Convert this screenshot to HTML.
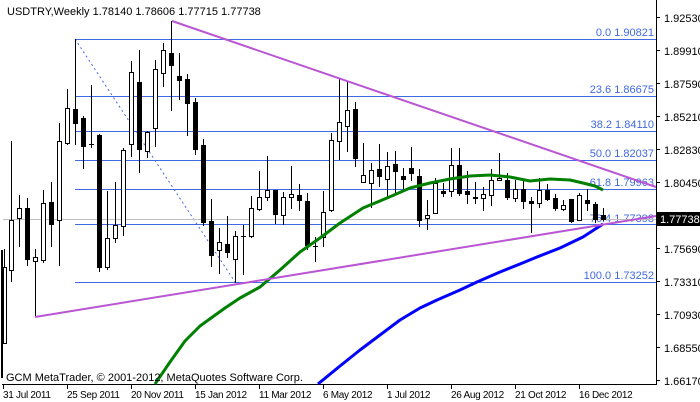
<!DOCTYPE html>
<html><head><meta charset="utf-8"><style>
html,body{margin:0;padding:0;background:#fff;}
svg{display:block;}
text{font-family:"Liberation Sans",sans-serif;font-size:11px;}
.d{font-size:10px;letter-spacing:-0.3px;}
</style></head><body>
<svg width="700" height="402" viewBox="0 0 700 402" xmlns="http://www.w3.org/2000/svg" shape-rendering="crispEdges">
<rect width="700" height="402" fill="#fff"/>
<line x1="656.5" y1="0" x2="656.5" y2="384.5" stroke="#000"/>
<line x1="2" y1="384.5" x2="657" y2="384.5" stroke="#000"/>
<g stroke="#000">
<line x1="657" y1="17.5" x2="660" y2="17.5"/><line x1="657" y1="50.5" x2="660" y2="50.5"/><line x1="657" y1="83.5" x2="660" y2="83.5"/><line x1="657" y1="116.5" x2="660" y2="116.5"/><line x1="657" y1="149.5" x2="660" y2="149.5"/><line x1="657" y1="182.5" x2="660" y2="182.5"/><line x1="657" y1="248.5" x2="660" y2="248.5"/><line x1="657" y1="281.5" x2="660" y2="281.5"/><line x1="657" y1="314.5" x2="660" y2="314.5"/><line x1="657" y1="347.5" x2="660" y2="347.5"/><line x1="657" y1="380.5" x2="660" y2="380.5"/>
<line x1="3.5" y1="385" x2="3.5" y2="389"/><line x1="67.5" y1="385" x2="67.5" y2="389"/><line x1="131.5" y1="385" x2="131.5" y2="389"/><line x1="195.5" y1="385" x2="195.5" y2="389"/><line x1="259.5" y1="385" x2="259.5" y2="389"/><line x1="323.5" y1="385" x2="323.5" y2="389"/><line x1="387.5" y1="385" x2="387.5" y2="389"/><line x1="451.5" y1="385" x2="451.5" y2="389"/><line x1="515.5" y1="385" x2="515.5" y2="389"/><line x1="579.5" y1="385" x2="579.5" y2="389"/>
</g>
<g fill="#000">
<text x="664" y="22">1.92530</text><text x="664" y="55">1.89910</text><text x="664" y="88">1.87590</text><text x="664" y="121">1.85210</text><text x="664" y="154">1.82830</text><text x="664" y="187">1.80450</text><text x="664" y="253">1.75690</text><text x="664" y="286">1.73310</text><text x="664" y="319">1.70930</text><text x="664" y="352">1.68550</text><text x="664" y="385">1.66170</text>
</g>
<g fill="#000" class="d">
<text class="d" x="3" y="398">31 Jul 2011</text><text class="d" x="67" y="398">25 Sep 2011</text><text class="d" x="131" y="398">20 Nov 2011</text><text class="d" x="195" y="398">15 Jan 2012</text><text class="d" x="259" y="398">11 Mar 2012</text><text class="d" x="323" y="398">6 May 2012</text><text class="d" x="387" y="398">1 Jul 2012</text><text class="d" x="451" y="398">26 Aug 2012</text><text class="d" x="515" y="398">21 Oct 2012</text><text class="d" x="579" y="398">16 Dec 2012</text>
</g>
<g stroke="#4169e1">
<line x1="75" y1="39.5" x2="656" y2="39.5"/><line x1="75" y1="96.5" x2="656" y2="96.5"/><line x1="75" y1="131.5" x2="656" y2="131.5"/><line x1="75" y1="160.5" x2="656" y2="160.5"/><line x1="75" y1="189.5" x2="656" y2="189.5"/><line x1="75" y1="224.5" x2="656" y2="224.5"/><line x1="75" y1="282.5" x2="656" y2="282.5"/>
</g>
<line x1="75" y1="39" x2="235" y2="282" stroke="#4169e1" stroke-dasharray="2,3" shape-rendering="auto"/>
<g fill="#4169e1" text-anchor="end">
<text x="654" y="36">0.0 1.90821</text><text x="654" y="93">23.6 1.86675</text><text x="654" y="128">38.2 1.84110</text><text x="654" y="157">50.0 1.82037</text><text x="654" y="186">61.8 1.79963</text><text x="654" y="222">76.4 1.77398</text><text x="654" y="279">100.0 1.73252</text>
</g>
<line x1="3" y1="219.5" x2="656" y2="219.5" stroke="#c0c0c0"/>
<g stroke="#000">
<rect x="1" y="250" width="2" height="128" stroke="none" fill="#000"/>
<line x1="4.5" y1="249" x2="4.5" y2="343"/><rect x="3.5" y="267.5" width="3" height="76" fill="#fff"/>
<line x1="11.5" y1="141" x2="11.5" y2="282"/><rect x="9.5" y="220.5" width="4" height="50" fill="#fff"/>
<line x1="19.5" y1="195" x2="19.5" y2="247"/><rect x="17.5" y="208.5" width="4" height="10" fill="#fff"/>
<line x1="27.5" y1="198" x2="27.5" y2="266"/><rect x="25" y="208" width="5" height="52" stroke="none"/>
<line x1="35.5" y1="249" x2="35.5" y2="317"/><rect x="33.5" y="257.5" width="4" height="4" fill="#fff"/>
<line x1="43.5" y1="190" x2="43.5" y2="263"/><rect x="41.5" y="203.5" width="4" height="57" fill="#fff"/>
<line x1="51.5" y1="182" x2="51.5" y2="247"/><rect x="49" y="202" width="5" height="23" stroke="none"/>
<line x1="59.5" y1="123" x2="59.5" y2="266"/><rect x="57.5" y="141.5" width="4" height="79" fill="#fff"/>
<line x1="67.5" y1="89" x2="67.5" y2="145"/><rect x="65.5" y="108.5" width="4" height="35" fill="#fff"/>
<line x1="75.5" y1="39" x2="75.5" y2="145"/><rect x="73" y="109" width="5" height="15" stroke="none"/>
<line x1="83.5" y1="116" x2="83.5" y2="169"/><rect x="81" y="118" width="5" height="29" stroke="none"/>
<line x1="91.5" y1="85" x2="91.5" y2="148"/><line x1="89" y1="144.5" x2="94" y2="144.5"/>
<line x1="99.5" y1="134" x2="99.5" y2="272"/><rect x="97" y="135" width="5" height="133" stroke="none"/>
<line x1="107.5" y1="191" x2="107.5" y2="270"/><rect x="105.5" y="238.5" width="4" height="29" fill="#fff"/>
<line x1="115.5" y1="182" x2="115.5" y2="243"/><rect x="113.5" y="225.5" width="4" height="13" fill="#fff"/>
<line x1="123.5" y1="148" x2="123.5" y2="236"/><rect x="121.5" y="150.5" width="4" height="76" fill="#fff"/>
<line x1="131.5" y1="61" x2="131.5" y2="157"/><rect x="129.5" y="72.5" width="4" height="72" fill="#fff"/>
<line x1="139.5" y1="50" x2="139.5" y2="173"/><rect x="137" y="82" width="5" height="68" stroke="none"/>
<line x1="147.5" y1="131" x2="147.5" y2="158"/><rect x="145.5" y="132.5" width="4" height="19" fill="#fff"/>
<line x1="155.5" y1="60" x2="155.5" y2="147"/><rect x="153.5" y="69.5" width="4" height="59" fill="#fff"/>
<line x1="163.5" y1="43" x2="163.5" y2="87"/><rect x="161.5" y="50.5" width="4" height="23" fill="#fff"/>
<line x1="171.5" y1="21" x2="171.5" y2="111"/><rect x="169" y="53" width="5" height="13" stroke="none"/>
<line x1="179.5" y1="53" x2="179.5" y2="100"/><rect x="177" y="76" width="5" height="5" stroke="none"/>
<line x1="187.5" y1="74" x2="187.5" y2="136"/><rect x="185" y="79" width="5" height="25" stroke="none"/>
<line x1="195.5" y1="98" x2="195.5" y2="155"/><rect x="193" y="102" width="5" height="48" stroke="none"/>
<line x1="203.5" y1="139" x2="203.5" y2="226"/><rect x="201" y="145" width="5" height="78" stroke="none"/>
<line x1="211.5" y1="199" x2="211.5" y2="267"/><rect x="209" y="221" width="5" height="35" stroke="none"/>
<line x1="219.5" y1="228" x2="219.5" y2="274"/><rect x="217.5" y="242.5" width="4" height="8" fill="#fff"/>
<line x1="227.5" y1="216" x2="227.5" y2="258"/><rect x="225" y="244" width="5" height="9" stroke="none"/>
<line x1="235.5" y1="231" x2="235.5" y2="283"/><rect x="233.5" y="236.5" width="4" height="23" fill="#fff"/>
<line x1="243.5" y1="225" x2="243.5" y2="275"/><line x1="241" y1="236.5" x2="246" y2="236.5"/>
<line x1="251.5" y1="196" x2="251.5" y2="238"/><rect x="249.5" y="208.5" width="4" height="28" fill="#fff"/>
<line x1="259.5" y1="171" x2="259.5" y2="211"/><rect x="257.5" y="197.5" width="4" height="12" fill="#fff"/>
<line x1="267.5" y1="156" x2="267.5" y2="201"/><rect x="265.5" y="190.5" width="4" height="7" fill="#fff"/>
<line x1="275.5" y1="190" x2="275.5" y2="224"/><rect x="273" y="190" width="5" height="25" stroke="none"/>
<line x1="283.5" y1="192" x2="283.5" y2="225"/><rect x="281.5" y="197.5" width="4" height="18" fill="#fff"/>
<line x1="291.5" y1="166" x2="291.5" y2="209"/><rect x="289.5" y="194.5" width="4" height="3" fill="#fff"/>
<line x1="299.5" y1="184" x2="299.5" y2="211"/><rect x="297" y="195" width="5" height="6" stroke="none"/>
<line x1="307.5" y1="193" x2="307.5" y2="250"/><rect x="305" y="201" width="5" height="45" stroke="none"/>
<line x1="315.5" y1="237" x2="315.5" y2="262"/><line x1="313" y1="246.5" x2="318" y2="246.5"/>
<line x1="323.5" y1="191" x2="323.5" y2="247"/><rect x="321.5" y="212.5" width="4" height="25" fill="#fff"/>
<line x1="331.5" y1="133" x2="331.5" y2="212"/><rect x="329.5" y="140.5" width="4" height="70" fill="#fff"/>
<line x1="339.5" y1="79" x2="339.5" y2="160"/><rect x="337.5" y="122.5" width="4" height="19" fill="#fff"/>
<line x1="347.5" y1="82" x2="347.5" y2="152"/><rect x="345.5" y="110.5" width="4" height="16" fill="#fff"/>
<line x1="355.5" y1="102" x2="355.5" y2="167"/><rect x="353" y="109" width="5" height="50" stroke="none"/>
<line x1="363.5" y1="143" x2="363.5" y2="182"/><rect x="361.5" y="175.5" width="4" height="7" fill="#fff"/>
<line x1="371.5" y1="163" x2="371.5" y2="208"/><rect x="369.5" y="170.5" width="4" height="13" fill="#fff"/>
<line x1="379.5" y1="144" x2="379.5" y2="187"/><rect x="377" y="169" width="5" height="8" stroke="none"/>
<line x1="387.5" y1="152" x2="387.5" y2="198"/><rect x="385.5" y="166.5" width="4" height="13" fill="#fff"/>
<line x1="395.5" y1="151" x2="395.5" y2="193"/><rect x="393" y="164" width="5" height="8" stroke="none"/>
<line x1="403.5" y1="168" x2="403.5" y2="190"/><rect x="401" y="176" width="5" height="4" stroke="none"/>
<line x1="411.5" y1="147" x2="411.5" y2="181"/><rect x="409" y="168" width="5" height="6" stroke="none"/>
<line x1="419.5" y1="169" x2="419.5" y2="227"/><rect x="417" y="176" width="5" height="45" stroke="none"/>
<line x1="427.5" y1="200" x2="427.5" y2="230"/><rect x="425.5" y="215.5" width="4" height="3" fill="#fff"/>
<line x1="435.5" y1="178" x2="435.5" y2="214"/><rect x="433.5" y="183.5" width="4" height="30" fill="#fff"/>
<line x1="443.5" y1="183" x2="443.5" y2="197"/><rect x="441" y="191" width="5" height="3" stroke="none"/>
<line x1="451.5" y1="148" x2="451.5" y2="197"/><rect x="449.5" y="165.5" width="4" height="26" fill="#fff"/>
<line x1="459.5" y1="148" x2="459.5" y2="196"/><rect x="457" y="165" width="5" height="29" stroke="none"/>
<line x1="467.5" y1="171" x2="467.5" y2="204"/><rect x="465" y="191" width="5" height="4" stroke="none"/>
<line x1="475.5" y1="182" x2="475.5" y2="204"/><rect x="473" y="197" width="5" height="2" stroke="none"/>
<line x1="483.5" y1="187" x2="483.5" y2="211"/><rect x="481.5" y="194.5" width="4" height="4" fill="#fff"/>
<line x1="491.5" y1="169" x2="491.5" y2="206"/><rect x="489.5" y="180.5" width="4" height="15" fill="#fff"/>
<line x1="499.5" y1="153" x2="499.5" y2="181"/><rect x="497.5" y="178.5" width="4" height="2" fill="#fff"/>
<line x1="507.5" y1="173" x2="507.5" y2="200"/><rect x="505" y="180" width="5" height="18" stroke="none"/>
<line x1="515.5" y1="180" x2="515.5" y2="202"/><rect x="513.5" y="189.5" width="4" height="9" fill="#fff"/>
<line x1="523.5" y1="180" x2="523.5" y2="209"/><rect x="521" y="189" width="5" height="13" stroke="none"/>
<line x1="531.5" y1="197" x2="531.5" y2="233"/><rect x="529" y="201" width="5" height="3" stroke="none"/>
<line x1="539.5" y1="178" x2="539.5" y2="208"/><rect x="537.5" y="190.5" width="4" height="13" fill="#fff"/>
<line x1="547.5" y1="184" x2="547.5" y2="201"/><rect x="545" y="190" width="5" height="10" stroke="none"/>
<line x1="555.5" y1="194" x2="555.5" y2="211"/><rect x="553" y="198" width="5" height="11" stroke="none"/>
<line x1="563.5" y1="200" x2="563.5" y2="211"/><rect x="561.5" y="205.5" width="4" height="4" fill="#fff"/>
<line x1="571.5" y1="199" x2="571.5" y2="223"/><rect x="569" y="199" width="5" height="23" stroke="none"/>
<line x1="579.5" y1="193" x2="579.5" y2="221"/><rect x="577.5" y="195.5" width="4" height="25" fill="#fff"/>
<line x1="587.5" y1="189" x2="587.5" y2="211"/><rect x="585" y="200" width="5" height="4" stroke="none"/>
<line x1="595.5" y1="202" x2="595.5" y2="223"/><rect x="593" y="204" width="5" height="16" stroke="none"/>
<line x1="603.5" y1="208" x2="603.5" y2="221"/><rect x="601" y="215" width="5" height="5" stroke="none"/>
</g>
<g fill="none" stroke-width="3" shape-rendering="auto" stroke-linejoin="round">
<polyline stroke="#008000" points="155,384 170,362 185,341 200,326 225,308 240,298 260,287 280,270 300,252 320,238 340,223 363,208 387,198 410,188 430,183 450,179 470,176 490,175 510,177 530,181 550,179 570,180 583,183 595,186 603,190"/>
<polyline stroke="#0000ff" points="318,384 340,366 360,350 380,335 400,320 420,308 437,300 460,290 477,282 500,272 520,264 537,257 560,248 583,237 603,224"/>
</g>
<g stroke="#ba55d3" stroke-width="2" shape-rendering="auto">
<line x1="172" y1="21" x2="656" y2="187"/>
<line x1="35" y1="317" x2="656" y2="216"/>
</g>
<rect x="657" y="212" width="43" height="14" fill="#000"/>
<text x="660" y="223" fill="#fff">1.77738</text>
<text x="7" y="15" fill="#000">USDTRY,Weekly  1.78140 1.78606 1.77715 1.77738</text>
<text x="6" y="381" fill="#000">GCM MetaTrader, © 2001-2012, MetaQuotes Software Corp.</text>
</svg>
</body></html>
